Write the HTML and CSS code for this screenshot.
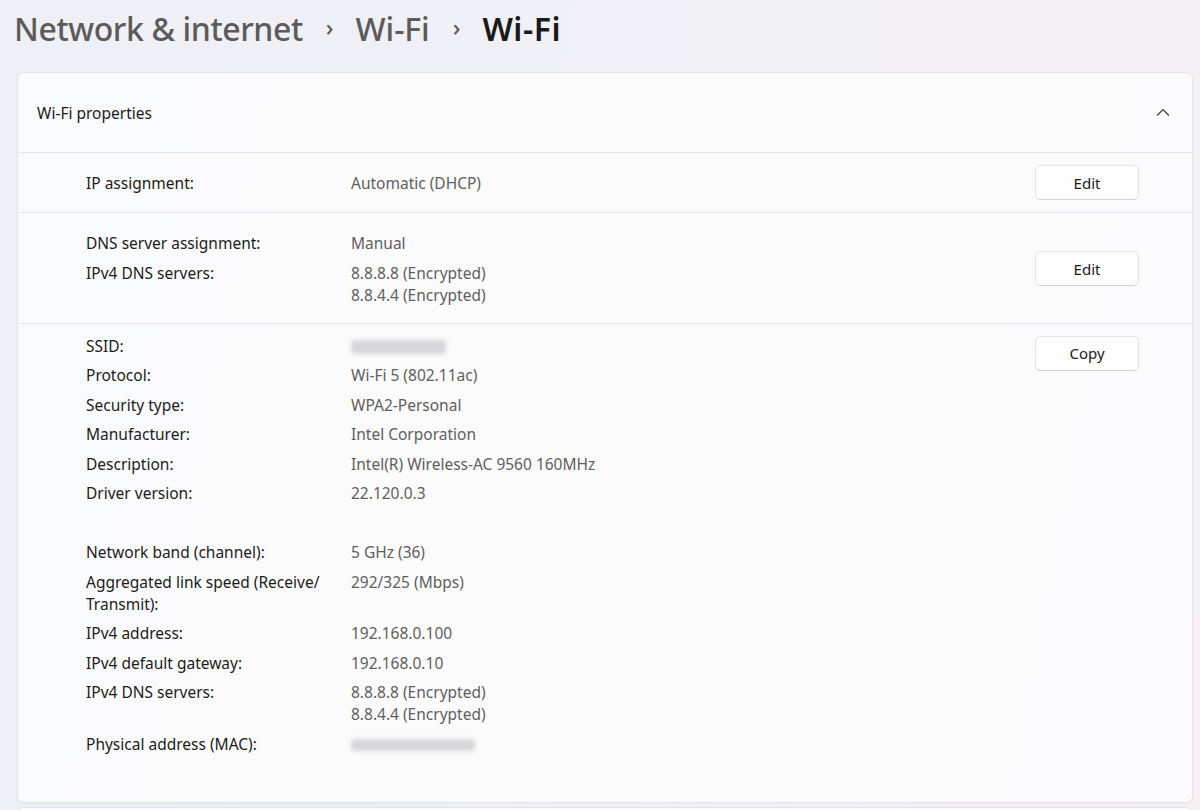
FILE: index.html
```html
<!DOCTYPE html>
<html lang="en">
<head>
    <meta charset="UTF-8">
    <meta name="viewport" content="width=device-width, initial-scale=1.0">
    <title>Wi-Fi properties</title>
    <link rel="stylesheet" href="styles.css">
</head>
<body>

<div class="page">
    <!-- Breadcrumb title -->
    <h1 class="crumbs">
        <span class="crumb first">Network &amp; internet</span>
        <span class="sep">&#x203A;</span>
        <span class="crumb">Wi-Fi</span>
        <span class="sep">&#x203A;</span>
        <span class="crumb current">Wi-Fi</span>
    </h1>

    <div class="card">
        <div class="card-head">
            <span>Wi-Fi properties</span>
            <svg class="chevron" width="14" height="8" viewBox="0 0 14 8">
                <path d="M1.5 7 L7 1.6 L12.5 7" fill="none" stroke="#3a3a3a" stroke-width="1.3" stroke-linecap="round" stroke-linejoin="round"/>
            </svg>
        </div>

        <div class="section single">
            <div class="props">
                <div class="label">IP assignment:</div>
                <div class="value">Automatic (DHCP)</div>
            </div>
            <button class="btn">Edit</button>
        </div>

        <div class="section dns">
            <div class="props">
                <div class="label">DNS server assignment:</div>
                <div class="value">Manual</div>
                <div class="label">IPv4 DNS servers:</div>
                <div class="value">8.8.8.8 (Encrypted)<br>8.8.4.4 (Encrypted)</div>
            </div>
            <button class="btn">Edit</button>
        </div>

        <div class="section details">
            <div class="props">
                <div class="label">SSID:</div>
                <div class="value"><span class="blur ssid"></span></div>
                <div class="label">Protocol:</div>
                <div class="value">Wi-Fi 5 (802.11ac)</div>
                <div class="label">Security type:</div>
                <div class="value">WPA2-Personal</div>
                <div class="label">Manufacturer:</div>
                <div class="value">Intel Corporation</div>
                <div class="label">Description:</div>
                <div class="value">Intel(R) Wireless-AC 9560 160MHz</div>
                <div class="label">Driver version:</div>
                <div class="value">22.120.0.3</div>
                <div class="spacer"></div>
                <div class="spacer"></div>
                <div class="label">Network band (channel):</div>
                <div class="value">5 GHz (36)</div>
                <div class="label">Aggregated link speed (Receive/ Transmit):</div>
                <div class="value">292/325 (Mbps)</div>
                <div class="label">IPv4 address:</div>
                <div class="value">192.168.0.100</div>
                <div class="label">IPv4 default gateway:</div>
                <div class="value">192.168.0.10</div>
                <div class="label">IPv4 DNS servers:</div>
                <div class="value">8.8.8.8 (Encrypted)<br>8.8.4.4 (Encrypted)</div>
                <div class="label">Physical address (MAC):</div>
                <div class="value"><span class="blur mac"></span></div>
            </div>
            <button class="btn">Copy</button>
        </div>
    </div>

    <div class="card next"></div>
</div>

</body>
</html>
```

FILE: styles.css
```css
* {
    margin: 0;
    padding: 0;
    box-sizing: border-box;
}

body {
    font-family: 'Noto Sans', 'Open Sans', sans-serif;
    background: linear-gradient(100deg, #eef0f6 0%, #f1f1f6 55%, #f6f0f3 100%);
    color: #1b1b1b;
    height: 810px;
    overflow: hidden;
}

.page {
    padding: 0 7px 0 17px;
}

/* Breadcrumb header */
.crumbs {
    display: flex;
    align-items: center;
    height: 57px;
    margin-left: -3px;
    font-size: 32px;
    font-weight: 500;
    color: #5b5b5b;
    letter-spacing: -0.1px;
}

.crumbs .first {
    letter-spacing: -0.4px;
}

.crumbs .sep {
    font-size: 24px;
    margin: 0 22px 0 23px;
    color: #5b5b5b;
    position: relative;
    top: -2px;
}

.crumbs .current {
    color: #1a1a1a;
    font-weight: 600;
    letter-spacing: 0.5px;
}

/* Card */
.card {
    margin-top: 15px;
    background: linear-gradient(100deg, #fafbfd 0%, #fcfbfb 50%, #fbfbfd 100%);
    border: 1px solid #e4e5ea;
    border-radius: 6px;
    box-shadow: 0 1px 2px rgba(0, 0, 0, 0.04);
}

.card.next {
    margin-top: 4px;
    height: 20px;
}

.card-head {
    height: 80px;
    display: flex;
    align-items: center;
    justify-content: space-between;
    padding: 0 22px 0 19px;
    font-size: 15.5px;
    border-bottom: 1px solid #e6e6ea;
}

.chevron {
    margin-top: -2px;
}

.section {
    display: flex;
    align-items: center;
    padding: 12px 53px 12px 68px;
    border-bottom: 1px solid #e6e6ea;
    font-size: 15.5px;
}

.section.dns {
    padding-top: 19px;
    padding-bottom: 17px;
}

.section.details {
    align-items: flex-start;
    padding-top: 11px;
    padding-bottom: 47px;
    border-bottom: none;
}

.section.details .btn {
    margin-top: 1px;
}

.props {
    flex: 1;
    display: grid;
    grid-template-columns: 265px 1fr;
    row-gap: 7.5px;
    line-height: 22px;
}

.label {
    color: #1b1b1b;
    padding-right: 12px;
}

.value {
    color: #5f5f5f;
}

.spacer {
    height: 22px;
}

.blur {
    display: inline-block;
    vertical-align: middle;
    background: #d7d7da;
    border-radius: 4px;
    filter: blur(2px);
}

.blur.ssid {
    width: 95px;
    height: 14px;
}

.blur.mac {
    width: 124px;
    height: 12px;
}

.btn {
    width: 104px;
    height: 35px;
    background: #fdfdfd;
    border: 1px solid #e4e4e6;
    border-bottom-color: #d2d2d5;
    border-radius: 5px;
    font-family: inherit;
    font-size: 15px;
    color: #1b1b1b;
}
```
